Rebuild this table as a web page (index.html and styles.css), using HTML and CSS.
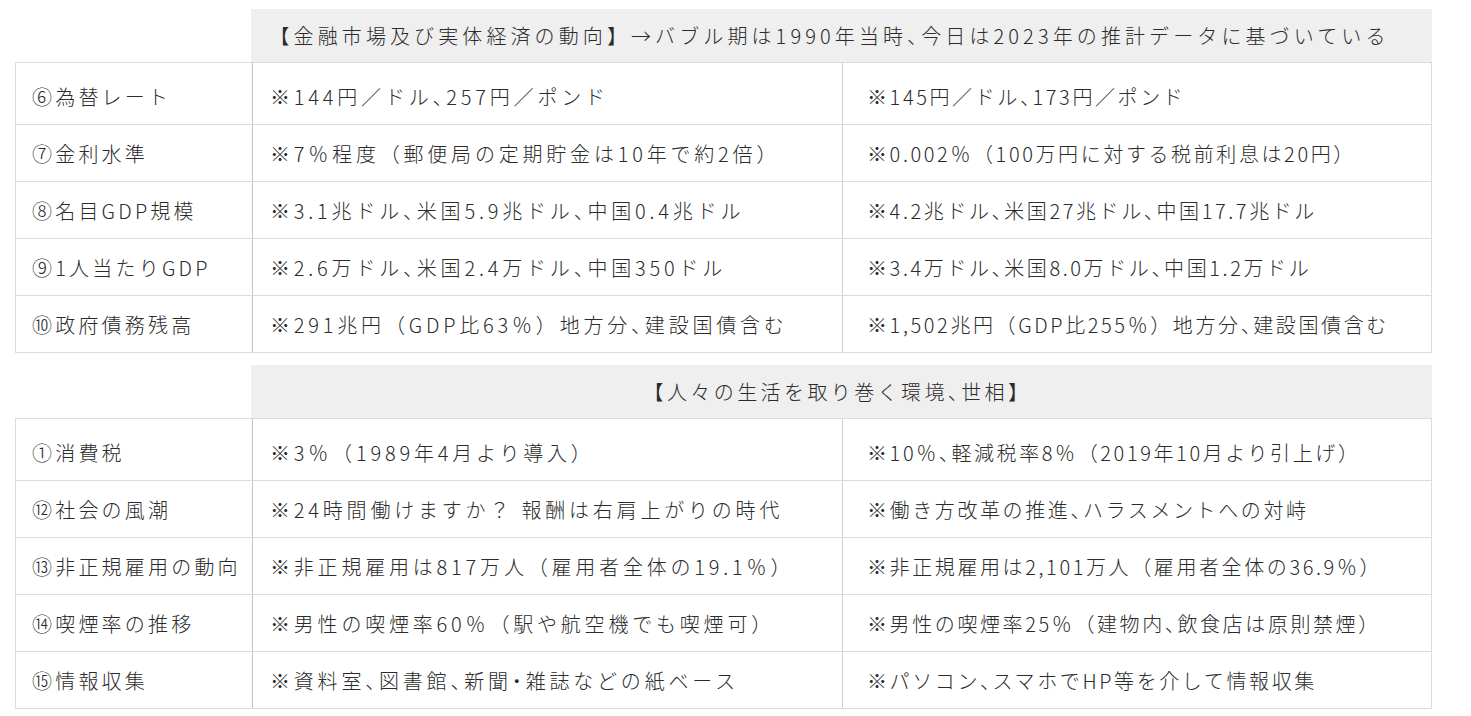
FILE: index.html
```html
<!DOCTYPE html>
<html lang="ja">
<head>
<meta charset="utf-8">
<link rel="stylesheet" href="styles.css">
</head>
<body>
<div class="page">
  <div class="section">
    <div class="blank"></div>
    <div class="head wide">【金融市場及び実体経済の動向】→バブル期は1990年当時<span class="h">、</span>今日は2023年の推計データに基づいている</div>
    <div class="row first">
      <div class="c1">⑥為替レート</div>
      <div class="c2">※144円／ドル<span class="h">、</span>257円／ポンド</div>
      <div class="c3">※145円／ドル<span class="h">、</span>173円／ポンド</div>
    </div>
    <div class="row">
      <div class="c1">⑦金利水準</div>
      <div class="c2">※7％程度（郵便局の定期貯金は10年で約2倍）</div>
      <div class="c3">※0.002％（100万円に対する税前利息は20円）</div>
    </div>
    <div class="row">
      <div class="c1">⑧名目GDP規模</div>
      <div class="c2">※3.1兆ドル<span class="h">、</span>米国5.9兆ドル<span class="h">、</span>中国0.4兆ドル</div>
      <div class="c3">※4.2兆ドル<span class="h">、</span>米国27兆ドル<span class="h">、</span>中国17.7兆ドル</div>
    </div>
    <div class="row">
      <div class="c1">⑨1人当たりGDP</div>
      <div class="c2">※2.6万ドル<span class="h">、</span>米国2.4万ドル<span class="h">、</span>中国350ドル</div>
      <div class="c3">※3.4万ドル<span class="h">、</span>米国8.0万ドル<span class="h">、</span>中国1.2万ドル</div>
    </div>
    <div class="row">
      <div class="c1">⑩政府債務残高</div>
      <div class="c2">※291兆円（GDP比63％）地方分<span class="h">、</span>建設国債含む</div>
      <div class="c3">※1,502兆円（GDP比255％）地方分<span class="h">、</span>建設国債含む</div>
    </div>
  </div>

  <div class="section second">
    <div class="blank"></div>
    <div class="head">【人々の生活を取り巻く環境<span class="h">、</span>世相】</div>
    <div class="row first">
      <div class="c1">①消費税</div>
      <div class="c2">※3％（1989年4月より導入）</div>
      <div class="c3">※10％<span class="h">、</span>軽減税率8％（2019年10月より引上げ）</div>
    </div>
    <div class="row">
      <div class="c1">⑫社会の風潮</div>
      <div class="c2">※24時間働けますか？ 報酬は右肩上がりの時代</div>
      <div class="c3">※働き方改革の推進<span class="h">、</span>ハラスメントへの対峙</div>
    </div>
    <div class="row">
      <div class="c1">⑬非正規雇用の動向</div>
      <div class="c2">※非正規雇用は817万人（雇用者全体の19.1％）</div>
      <div class="c3">※非正規雇用は2,101万人（雇用者全体の36.9％）</div>
    </div>
    <div class="row">
      <div class="c1">⑭喫煙率の推移</div>
      <div class="c2">※男性の喫煙率60％（駅や航空機でも喫煙可）</div>
      <div class="c3">※男性の喫煙率25％（建物内<span class="h">、</span>飲食店は原則禁煙）</div>
    </div>
    <div class="row">
      <div class="c1">⑮情報収集</div>
      <div class="c2">※資料室<span class="h">、</span>図書館<span class="h">、</span>新聞<span class="h">・</span>雑誌などの紙ベース</div>
      <div class="c3">※パソコン<span class="h">、</span>スマホでHP等を介して情報収集</div>
    </div>
  </div>
</div>
</body>
</html>
```

FILE: styles.css
```css
html, body {
  margin: 0;
  padding: 0;
  background: #ffffff;
}

body {
  font-family: "Noto Sans CJK JP", "Noto Sans", sans-serif;
  font-weight: 300;
  color: #2b2b2b;
  font-size: 20px;
}

.page {
  padding: 9px 0 0 15px;
  width: 1417px;
}

.section {
  display: grid;
  grid-template-columns: 236px 1fr;
}

.section.second {
  margin-top: 12px;
}

.blank {
  height: 53px;
}

.head {
  background: #efefef;
  height: 53px;
  display: flex;
  align-items: center;
  justify-content: center;
  letter-spacing: 3.4px;
  padding-right: 8px;
  box-sizing: border-box;
}

.head.wide {
  letter-spacing: 4.1px;
  padding-right: 24px;
}

.h {
  font-feature-settings: "halt";
}

.row {
  grid-column: 1 / 3;
  display: grid;
  grid-template-columns: 236px 590px 591px;
  height: 57px;
  border: 1px solid #dcdcdc;
  border-top: none;
  box-sizing: border-box;
}

.row.first {
  height: 63px;
  border-top: 1px solid #dcdcdc;
  padding-top: 6px;
}

.row > div {
  display: flex;
  align-items: center;
  white-space: nowrap;
}

.c1 {
  padding-left: 16px;
  letter-spacing: 3.2px;
}

.c2 {
  padding-left: 17px;
  letter-spacing: 3.8px;
  border-left: 1px solid #c4c4c4;
}

.c3 {
  padding-left: 24px;
  letter-spacing: 2.6px;
  border-left: 1px solid #d0d0d0;
}

.row.first .c2,
.row.first .c3 {
  margin-top: -6px;
  padding-top: 6px;
}
```
